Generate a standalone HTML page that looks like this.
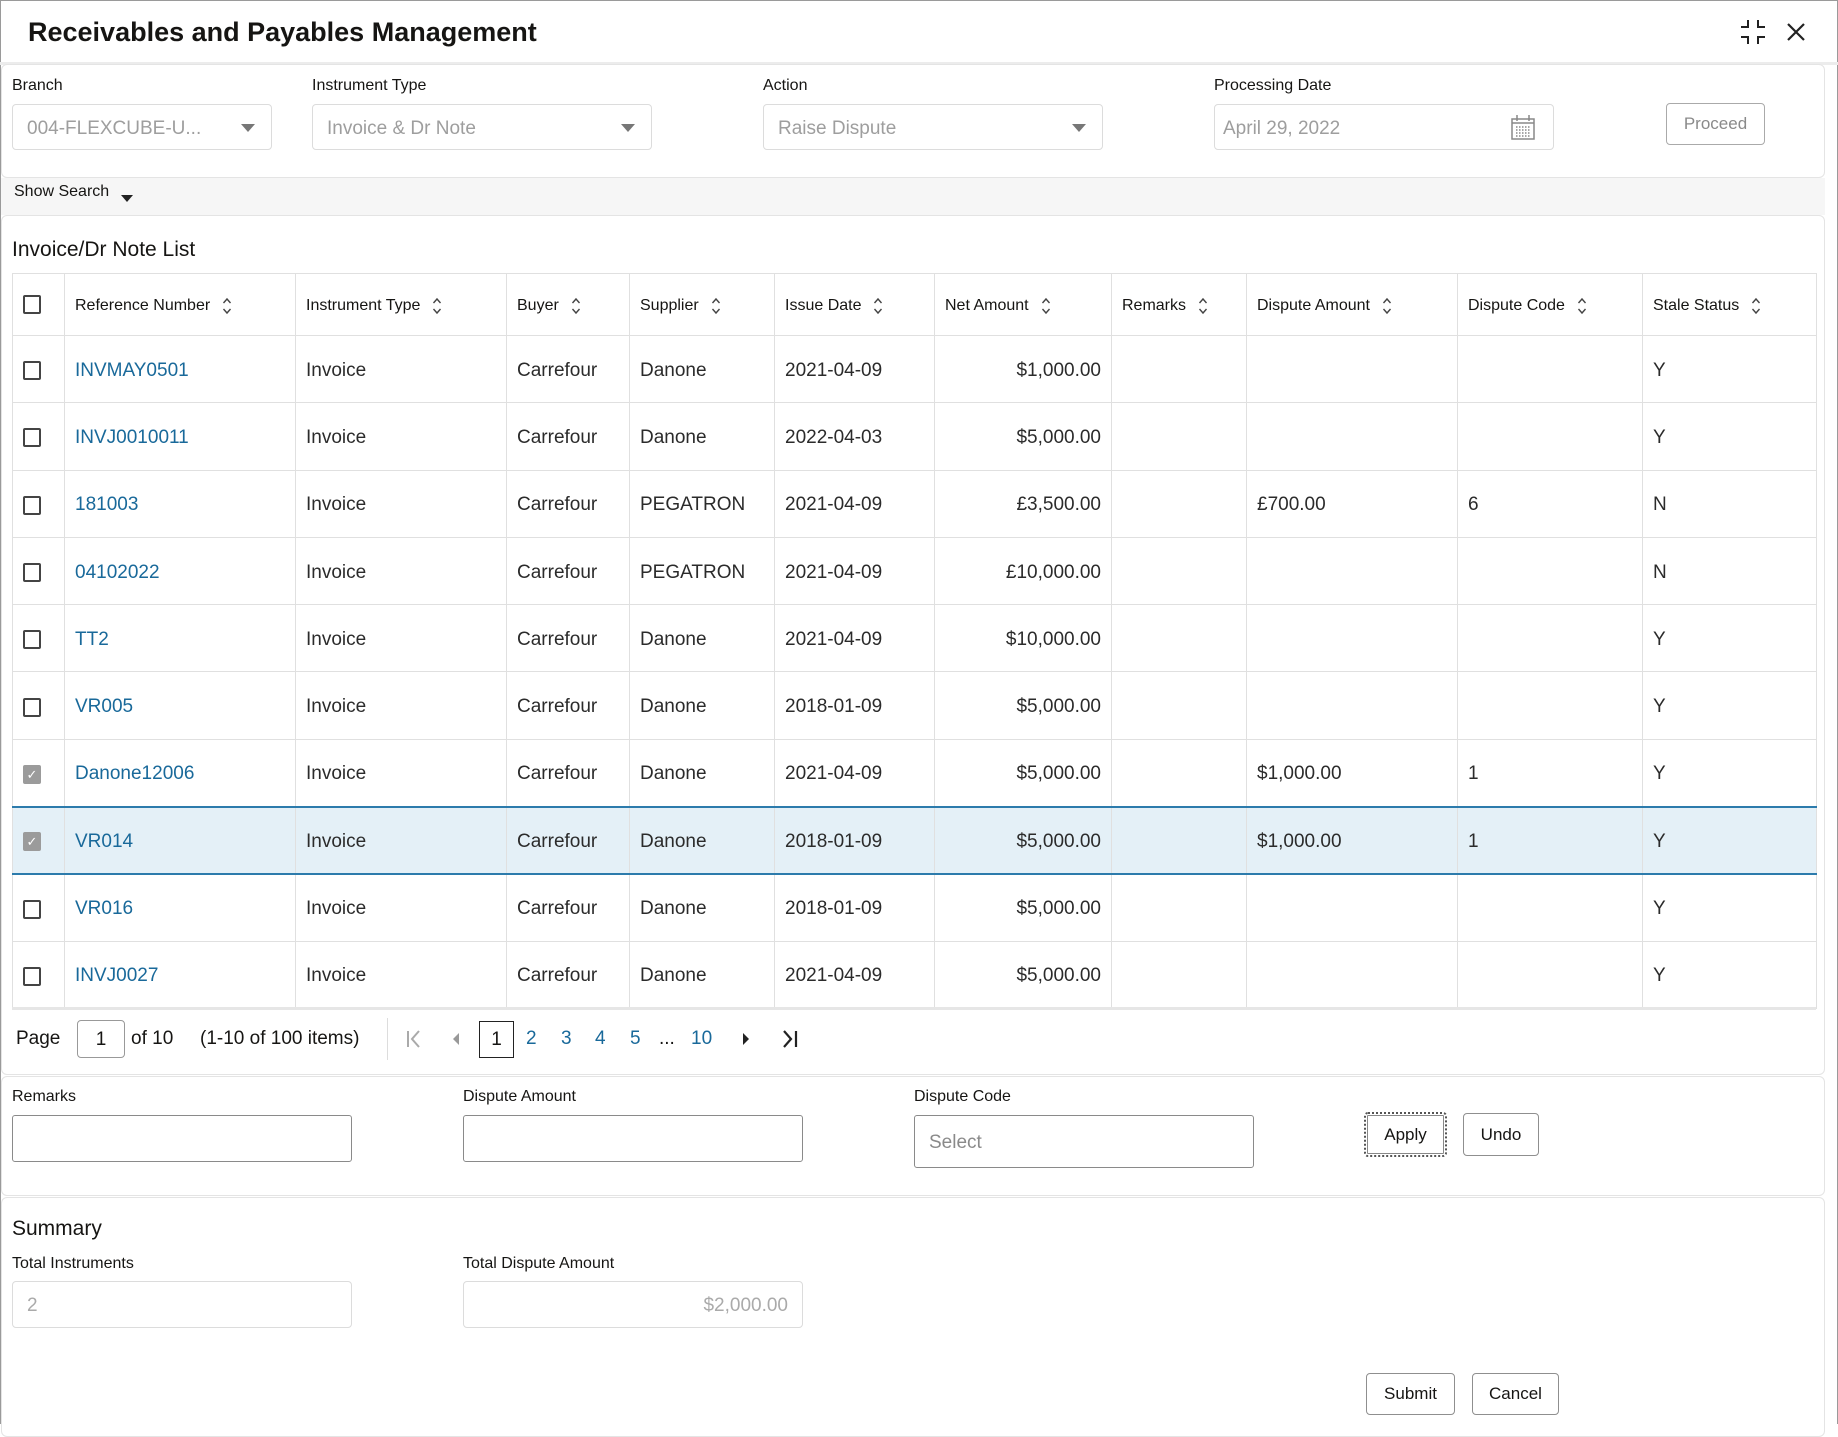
<!DOCTYPE html>
<html><head><meta charset="utf-8"><style>
*{box-sizing:border-box;margin:0;padding:0}
body{width:1838px;height:1424px;background:#fff;font-family:"Liberation Sans",sans-serif;color:#161513;position:relative;overflow:hidden}
.a{position:absolute}
.frame{left:0;top:0;width:1838px;height:1424px;border:1px solid #9a9a9a;border-bottom:none}
.card{border:1px solid #e4e4e4;border-radius:6px;background:#fff}
.lbl{font-size:16px;color:#161513}
.inp{border:1px solid #dcdcdc;border-radius:4px;background:#fff;font-size:19px;color:#9e9e9e;padding-left:14px;display:flex;align-items:center}
.inp2{border:1px solid #8a8a8a;border-radius:3px;background:#fff;font-size:19px;color:#8a8a8a;padding-left:14px;display:flex;align-items:center}
.caret{position:absolute;right:16px;top:50%;margin-top:-3px;width:0;height:0;border-left:7px solid transparent;border-right:7px solid transparent;border-top:8px solid #777}
.btn{border:1px solid #8f8f8f;border-radius:4px;background:#fff;font-size:17px;color:#161513;display:flex;align-items:center;justify-content:center}
table{border-collapse:collapse;table-layout:fixed;position:absolute;left:12px;top:273px;width:1804px}
td,th{border:1px solid #e0e0e0;font-size:19px;color:#2b2b2b;padding:3px 10px 0;white-space:nowrap;text-align:left;font-weight:normal}
th{height:62px;font-size:16px;color:#161513}
td{height:67.3px}
th svg{margin-left:12px;vertical-align:middle}
td.r{text-align:right}
td.l{color:#19699a}
.cb{display:inline-block;width:18px;height:19px;border:2px solid #444;border-radius:2px;vertical-align:middle}
.cb.on{background:#9b9b9b;border-color:#9b9b9b;color:#fff;font-size:13px;text-align:center;line-height:15px}
tr.sel td{background:#e4f0f7;border-top:2px solid #2c7bac;border-bottom:2px solid #2c7bac}
.pg{font-size:19px;top:1028px}
</style></head><body>
<svg width="0" height="0" style="position:absolute"><defs><symbol id="s" viewBox="0 0 10 18"><path d="M1.5 6L5 2l3.5 4M1.5 12L5 16l3.5-4" fill="none" stroke="#444" stroke-width="1.4"/></symbol></defs></svg>
<div class="a frame"></div>
<div class="a" style="left:28px;top:17px;font-size:27px;font-weight:bold">Receivables and Payables Management</div>
<svg class="a" style="left:1740px;top:19px" width="26" height="26" viewBox="0 0 26 26" fill="none" stroke="#222" stroke-width="2"><path d="M8 1v7H1M18 1v7h7M8 25v-7H1M18 25v-7h7"/></svg>
<svg class="a" style="left:1787px;top:23px" width="18" height="18" viewBox="0 0 18 18" stroke="#222" stroke-width="2.2"><path d="M1 1l16 16M17 1L1 17"/></svg>
<div class="a" style="left:0;top:62px;width:1838px;height:3px;background:#ececec"></div>

<div class="a card" style="left:1px;top:64px;width:1824px;height:114px"></div>
<div class="a lbl" style="left:12px;top:77px">Branch</div>
<div class="a lbl" style="left:312px;top:77px">Instrument Type</div>
<div class="a lbl" style="left:763px;top:77px">Action</div>
<div class="a lbl" style="left:1214px;top:77px">Processing Date</div>
<div class="a inp" style="left:12px;top:104px;width:260px;height:46px;padding-top:3px">004-FLEXCUBE-U...<span class="caret"></span></div>
<div class="a inp" style="left:312px;top:104px;width:340px;height:46px;padding-top:3px">Invoice &amp; Dr Note<span class="caret"></span></div>
<div class="a inp" style="left:763px;top:104px;width:340px;height:46px;padding-top:3px">Raise Dispute<span class="caret"></span></div>
<div class="a inp" style="left:1214px;top:104px;width:340px;height:46px;padding-left:8px;padding-top:3px">April 29, 2022
<svg class="a" style="right:18px;top:10px" width="24" height="25" viewBox="0 0 24 25" fill="none" stroke="#888" stroke-width="1.5"><rect x="1" y="4" width="22" height="20"/><path d="M6 0v6M18 0v6M1 8h22"/><path d="M5 12h14M5 15h14M5 18h14M5 21h14" stroke-dasharray="1.5 1.5"/></svg></div>
<div class="a btn" style="left:1666px;top:103px;width:99px;height:42px;color:#8a8a8a;border-color:#aaa">Proceed</div>

<div class="a" style="left:1px;top:178px;width:1824px;height:37px;background:#f6f6f6"></div>
<div class="a" style="left:14px;top:183px;font-size:16px">Show Search</div>
<div class="a" style="left:121px;top:195px;border-left:6px solid transparent;border-right:6px solid transparent;border-top:7px solid #222"></div>

<div class="a card" style="left:1px;top:215px;width:1824px;height:860px"></div>
<div class="a" style="left:12px;top:238px;font-size:21px">Invoice/Dr Note List</div>

<table>
<colgroup><col style="width:52px"><col style="width:231px"><col style="width:211px"><col style="width:123px"><col style="width:145px"><col style="width:160px"><col style="width:177px"><col style="width:135px"><col style="width:211px"><col style="width:185px"><col style="width:174px"></colgroup>
<tr><th style="padding:0 0 0 10px"><span class="cb"></span></th><th>Reference Number<svg width="10" height="18"><use href="#s"/></svg></th><th>Instrument Type<svg width="10" height="18"><use href="#s"/></svg></th><th>Buyer<svg width="10" height="18"><use href="#s"/></svg></th><th>Supplier<svg width="10" height="18"><use href="#s"/></svg></th><th>Issue Date<svg width="10" height="18"><use href="#s"/></svg></th><th>Net Amount<svg width="10" height="18"><use href="#s"/></svg></th><th>Remarks<svg width="10" height="18"><use href="#s"/></svg></th><th>Dispute Amount<svg width="10" height="18"><use href="#s"/></svg></th><th>Dispute Code<svg width="10" height="18"><use href="#s"/></svg></th><th>Stale Status<svg width="10" height="18"><use href="#s"/></svg></th></tr>
<tr><td><span class="cb"></span></td><td class="l">INVMAY0501</td><td>Invoice</td><td>Carrefour</td><td>Danone</td><td>2021-04-09</td><td class="r">$1,000.00</td><td></td><td></td><td></td><td>Y</td></tr>
<tr><td><span class="cb"></span></td><td class="l">INVJ0010011</td><td>Invoice</td><td>Carrefour</td><td>Danone</td><td>2022-04-03</td><td class="r">$5,000.00</td><td></td><td></td><td></td><td>Y</td></tr>
<tr><td><span class="cb"></span></td><td class="l">181003</td><td>Invoice</td><td>Carrefour</td><td>PEGATRON</td><td>2021-04-09</td><td class="r">£3,500.00</td><td></td><td>£700.00</td><td>6</td><td>N</td></tr>
<tr><td><span class="cb"></span></td><td class="l">04102022</td><td>Invoice</td><td>Carrefour</td><td>PEGATRON</td><td>2021-04-09</td><td class="r">£10,000.00</td><td></td><td></td><td></td><td>N</td></tr>
<tr><td><span class="cb"></span></td><td class="l">TT2</td><td>Invoice</td><td>Carrefour</td><td>Danone</td><td>2021-04-09</td><td class="r">$10,000.00</td><td></td><td></td><td></td><td>Y</td></tr>
<tr><td><span class="cb"></span></td><td class="l">VR005</td><td>Invoice</td><td>Carrefour</td><td>Danone</td><td>2018-01-09</td><td class="r">$5,000.00</td><td></td><td></td><td></td><td>Y</td></tr>
<tr><td><span class="cb on">&#10003;</span></td><td class="l">Danone12006</td><td>Invoice</td><td>Carrefour</td><td>Danone</td><td>2021-04-09</td><td class="r">$5,000.00</td><td></td><td>$1,000.00</td><td>1</td><td>Y</td></tr>
<tr class="sel"><td><span class="cb on">&#10003;</span></td><td class="l">VR014</td><td>Invoice</td><td>Carrefour</td><td>Danone</td><td>2018-01-09</td><td class="r">$5,000.00</td><td></td><td>$1,000.00</td><td>1</td><td>Y</td></tr>
<tr><td><span class="cb"></span></td><td class="l">VR016</td><td>Invoice</td><td>Carrefour</td><td>Danone</td><td>2018-01-09</td><td class="r">$5,000.00</td><td></td><td></td><td></td><td>Y</td></tr>
<tr><td><span class="cb"></span></td><td class="l">INVJ0027</td><td>Invoice</td><td>Carrefour</td><td>Danone</td><td>2021-04-09</td><td class="r">$5,000.00</td><td></td><td></td><td></td><td>Y</td></tr>
</table>
<div class="a" style="left:12px;top:1007px;width:1804px;height:3px;background:#e6e6e6"></div>

<div class="a pg" style="left:16px">Page</div>
<div class="a" style="left:77px;top:1020px;width:48px;height:38px;border:1px solid #999;border-radius:4px;font-size:19px;text-align:center;line-height:38px">1</div>
<div class="a pg" style="left:131px">of 10</div>
<div class="a pg" style="left:200px">(1-10 of 100 items)</div>
<div class="a" style="left:387px;top:1018px;width:1px;height:42px;background:#ddd"></div>
<svg class="a" style="left:406px;top:1030px" width="16" height="18" viewBox="0 0 16 18" fill="none" stroke="#aaa" stroke-width="2"><path d="M2 1v16M13 1L6 9l7 8"/></svg>
<div class="a" style="left:453px;top:1033px;border-top:6px solid transparent;border-bottom:6px solid transparent;border-right:6px solid #999"></div>
<div class="a" style="left:479px;top:1021px;width:35px;height:37px;border:1.5px solid #222;font-size:19px;text-align:center;line-height:36px">1</div>
<div class="a pg" style="left:526px;color:#19699a">2</div>
<div class="a pg" style="left:561px;color:#19699a">3</div>
<div class="a pg" style="left:595px;color:#19699a">4</div>
<div class="a pg" style="left:630px;color:#19699a">5</div>
<div class="a pg" style="left:659px">...</div>
<div class="a pg" style="left:691px;color:#19699a">10</div>
<div class="a" style="left:743px;top:1033px;border-top:6px solid transparent;border-bottom:6px solid transparent;border-left:6px solid #222"></div>
<svg class="a" style="left:782px;top:1030px" width="16" height="18" viewBox="0 0 16 18" fill="none" stroke="#222" stroke-width="2.2"><path d="M2 1l7 8-7 8M14 1v16"/></svg>

<div class="a card" style="left:1px;top:1076px;width:1824px;height:120px"></div>
<div class="a lbl" style="left:12px;top:1088px">Remarks</div>
<div class="a lbl" style="left:463px;top:1088px">Dispute Amount</div>
<div class="a lbl" style="left:914px;top:1088px">Dispute Code</div>
<div class="a inp2" style="left:12px;top:1115px;width:340px;height:47px"></div>
<div class="a inp2" style="left:463px;top:1115px;width:340px;height:47px"></div>
<div class="a inp2" style="left:914px;top:1115px;width:340px;height:53px;padding-top:3px">Select</div>
<div class="a btn" style="left:1364px;top:1112px;width:83px;height:45px;border:2px dotted #555;outline:1px solid #888;outline-offset:-4px">Apply</div>
<div class="a btn" style="left:1463px;top:1113px;width:76px;height:43px">Undo</div>

<div class="a card" style="left:1px;top:1197px;width:1824px;height:240px"></div>
<div class="a" style="left:12px;top:1217px;font-size:21px">Summary</div>
<div class="a lbl" style="left:12px;top:1255px">Total Instruments</div>
<div class="a lbl" style="left:463px;top:1255px">Total Dispute Amount</div>
<div class="a inp" style="left:12px;top:1281px;width:340px;height:47px;color:#aaa;padding-top:3px">2</div>
<div class="a inp" style="left:463px;top:1281px;width:340px;height:47px;color:#aaa;justify-content:flex-end;padding-right:14px;padding-top:3px">$2,000.00</div>
<div class="a btn" style="left:1366px;top:1373px;width:89px;height:42px">Submit</div>
<div class="a btn" style="left:1472px;top:1373px;width:87px;height:42px">Cancel</div>
</body></html>
